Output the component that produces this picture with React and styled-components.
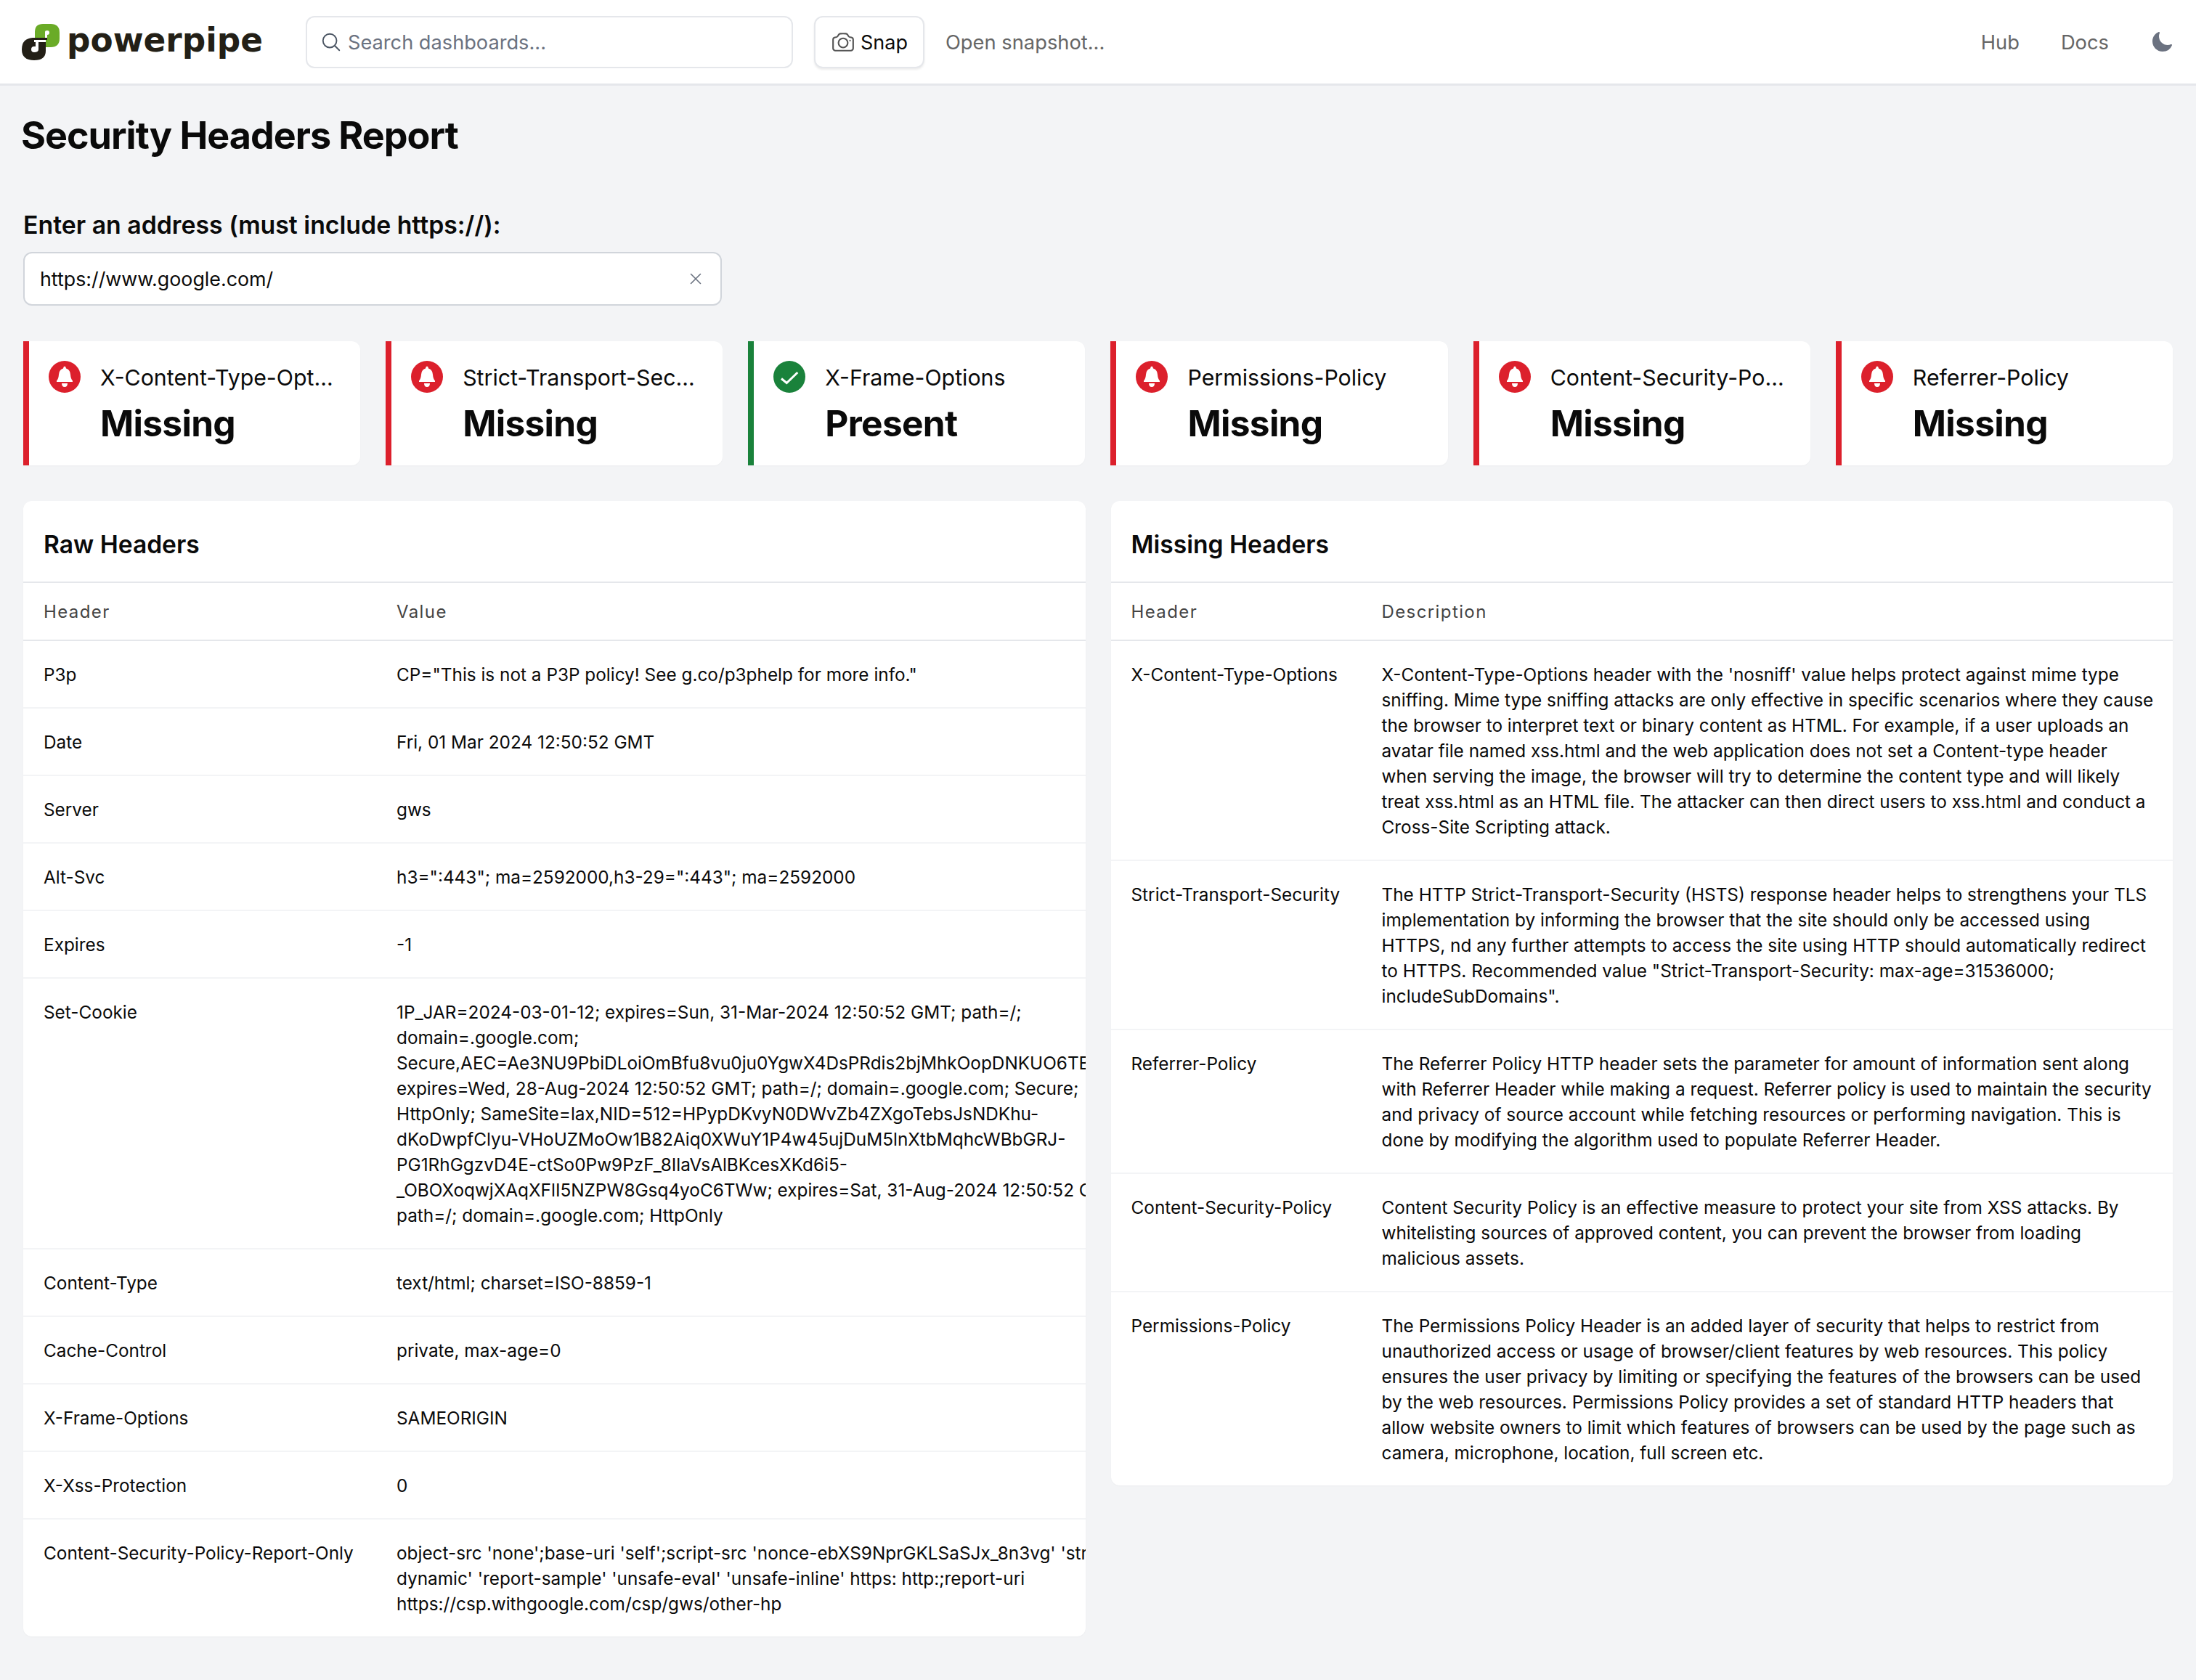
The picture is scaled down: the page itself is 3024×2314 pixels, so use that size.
import React from "react";
import styled, { createGlobalStyle } from "styled-components";
import { HiOutlineMagnifyingGlass, HiOutlineCamera, HiOutlineXMark, HiMoon } from "react-icons/hi2";

const Global = createGlobalStyle`
  html, body { margin: 0; padding: 0; background: #f3f4f6; }
  body { font-family: Inter, "Liberation Sans", sans-serif; color: #0a0a0a; }
  * { box-sizing: border-box; }
`;

const Page = styled.div`
  width: 3024px;
  min-height: 2314px;
  background: #f3f4f6;
`;
const TopBar = styled.header`
  height: 118px;
  background: #fff;
  border-bottom: 3px solid #e5e7eb;
  display: flex;
  align-items: center;
  padding: 1px 31px 0 28px;
`;
const LogoBox = styled.div`
  width: 393px;
  flex: none;
  display: flex;
`;
const SearchBox = styled.div`
  width: 671px;
  height: 72px;
  flex: none;
  border: 2px solid #e5e7eb;
  border-radius: 12px;
  display: flex;
  align-items: center;
  gap: 8px;
  padding-left: 18px;
  color: #6b7280;
  font-size: 27.2px;
  svg { color: #4b5563; font-size: 30px; }
`;
const SnapButton = styled.div`
  margin-left: 29px;
  width: 152px;
  height: 72px;
  flex: none;
  background: #fff;
  border: 2px solid #e5e7eb;
  border-radius: 12px;
  box-shadow: 0 2px 3px rgba(0, 0, 0, 0.08);
  display: flex;
  align-items: center;
  justify-content: center;
  gap: 7px;
  font-size: 27px;
  color: #0a0a0a;
  svg { color: #555; font-size: 34px; }
`;
const NavLink = styled.span`
  font-size: 27.3px;
  color: #666;
`;
const OpenLink = styled(NavLink)`
  margin-left: 29px;
`;
const Spacer = styled.div`
  flex: 1;
`;
const RightNav = styled.div`
  display: flex;
  align-items: center;
  gap: 57px;
  svg { color: #6b7280; font-size: 32px; display: block; }
`;
const Main = styled.main`
  padding: 0 32px;
`;
const Title = styled.h1`
  margin: 33px 0 0 -3px;
  font-size: 52px;
  line-height: 72px;
  font-weight: 700;
  letter-spacing: -1px;
  color: #0a0a0a;
`;
const FieldLabel = styled.label`
  display: block;
  margin-top: 65px;
  font-size: 33.8px;
  line-height: 44px;
  font-weight: 600;
`;
const AddressField = styled.div`
  margin-top: 15px;
  width: 962px;
  height: 74px;
  background: #fff;
  border: 2px solid #d1d5db;
  border-radius: 12px;
  display: flex;
  align-items: center;
  justify-content: space-between;
  padding: 0 21px 0 21px;
  font-size: 26.8px;
  svg { color: #6b7280; font-size: 26px; }
`;
const CardRow = styled.section`
  margin-top: 49px;
  display: grid;
  grid-template-columns: repeat(6, 1fr);
  gap: 35px;
`;
const Card = styled.article`
  height: 171px;
  background: #fff;
  border-left: 8px solid ${(p) => (p.$ok ? "#1a823b" : "#dc202c")};
  border-radius: 0 12px 12px 0;
  padding: 27px 35px 0 27px;
  display: grid;
  grid-template-columns: 44px minmax(0, 1fr);
  column-gap: 27px;
  box-shadow: 0 1px 2px rgba(0, 0, 0, 0.03);
`;
const CardBody = styled.div`
  min-width: 0;
`;
const CardName = styled.div`
  font-size: 30.3px;
  line-height: 46px;
  white-space: nowrap;
  overflow: hidden;
  text-overflow: ellipsis;
`;
const CardValue = styled.div`
  margin-top: 8px;
  font-size: 49.6px;
  line-height: 64px;
  font-weight: 700;
  letter-spacing: -0.7px;
`;
const Panels = styled.section`
  margin-top: 49px;
  display: grid;
  grid-template-columns: 1fr 1fr;
  gap: 35px;
  align-items: start;
`;
const Panel = styled.div`
  background: #fff;
  border-radius: 12px;
  overflow: hidden;
  box-shadow: 0 1px 2px rgba(0, 0, 0, 0.03);
`;
const PanelTitle = styled.h2`
  margin: 0;
  height: 113px;
  padding: 7px 28px 0;
  display: flex;
  align-items: center;
  font-size: 33.6px;
  font-weight: 600;
  border-bottom: 2px solid #e5e7eb;
`;
const Table = styled.table`
  border-collapse: collapse;
  table-layout: fixed;
  width: ${(p) => p.$width}px;
`;
const Th = styled.th`
  height: 79px;
  padding: 1px 0 0 28px;
  text-align: left;
  font-size: 24px;
  font-weight: 400;
  letter-spacing: 1.4px;
  color: #444;
  border-bottom: 2px solid #e5e7eb;
`;
const Tr = styled.tr`
  border-top: 2px solid #f3f4f6;
  &:first-child { border-top: 0; }
`;
const Td = styled.td`
  padding: 29px 22px 27px 28px;
  vertical-align: top;
  font-size: 24.35px;
  line-height: 35px;
`;

const raw = [
  ["P3p", 'CP="This is not a P3P policy! See g.co/p3phelp for more info."'],
  ["Date", "Fri, 01 Mar 2024 12:50:52 GMT"],
  ["Server", "gws"],
  ["Alt-Svc", 'h3=":443"; ma=2592000,h3-29=":443"; ma=2592000'],
  ["Expires", "-1"],
  ["Set-Cookie", "1P_JAR=2024-03-01-12; expires=Sun, 31-Mar-2024 12:50:52 GMT; path=/; domain=.google.com; Secure,AEC=Ae3NU9PbiDLoiOmBfu8vu0ju0YgwX4DsPRdis2bjMhkOopDNKUO6TBsZKw; expires=Wed, 28-Aug-2024 12:50:52 GMT; path=/; domain=.google.com; Secure; HttpOnly; SameSite=lax,NID=512=HPypDKvyN0DWvZb4ZXgoTebsJsNDKhu-dKoDwpfClyu-VHoUZMoOw1B82Aiq0XWuY1P4w45ujDuM5lnXtbMqhcWBbGRJ-PG1RhGgzvD4E-ctSo0Pw9PzF_8IlaVsAlBKcesXKd6i5-_OBOXoqwjXAqXFlI5NZPW8Gsq4yoC6TWw; expires=Sat, 31-Aug-2024 12:50:52 GMT; path=/; domain=.google.com; HttpOnly"],
  ["Content-Type", "text/html; charset=ISO-8859-1"],
  ["Cache-Control", "private, max-age=0"],
  ["X-Frame-Options", "SAMEORIGIN"],
  ["X-Xss-Protection", "0"],
  ["Content-Security-Policy-Report-Only", "object-src 'none';base-uri 'self';script-src 'nonce-ebXS9NprGKLSaSJx_8n3vg' 'strict-dynamic' 'report-sample' 'unsafe-eval' 'unsafe-inline' https: http:;report-uri https://csp.withgoogle.com/csp/gws/other-hp"],
];

const missing = [
  ["X-Content-Type-Options", "X-Content-Type-Options header with the 'nosniff' value helps protect against mime type sniffing. Mime type sniffing attacks are only effective in specific scenarios where they cause the browser to interpret text or binary content as HTML. For example, if a user uploads an avatar file named xss.html and the web application does not set a Content-type header when serving the image, the browser will try to determine the content type and will likely treat xss.html as an HTML file. The attacker can then direct users to xss.html and conduct a Cross-Site Scripting attack."],
  ["Strict-Transport-Security", "The HTTP Strict-Transport-Security (HSTS) response header helps to strengthens your TLS implementation by informing the browser that the site should only be accessed using HTTPS, nd any further attempts to access the site using HTTP should automatically redirect to HTTPS. Recommended value \"Strict-Transport-Security: max-age=31536000; includeSubDomains\"."],
  ["Referrer-Policy", "The Referrer Policy HTTP header sets the parameter for amount of information sent along with Referrer Header while making a request. Referrer policy is used to maintain the security and privacy of source account while fetching resources or performing navigation. This is done by modifying the algorithm used to populate Referrer Header."],
  ["Content-Security-Policy", "Content Security Policy is an effective measure to protect your site from XSS attacks. By whitelisting sources of approved content, you can prevent the browser from loading malicious assets."],
  ["Permissions-Policy", "The Permissions Policy Header is an added layer of security that helps to restrict from unauthorized access or usage of browser/client features by web resources. This policy ensures the user privacy by limiting or specifying the features of the browsers can be used by the web resources. Permissions Policy provides a set of standard HTTP headers that allow website owners to limit which features of browsers can be used by the page such as camera, microphone, location, full screen etc."],
];

const cards = [
  ["X-Content-Type-Options", false],
  ["Strict-Transport-Security", false],
  ["X-Frame-Options", true],
  ["Permissions-Policy", false],
  ["Content-Security-Policy", false],
  ["Referrer-Policy", false],
];

const Logo = () => (
  <svg width="340" height="60" viewBox="28 28 340 60" aria-label="powerpipe">
    <path d="M48 53 V44 Q48 33 59 33 H70 Q82 33 82 45 V53 Q82 65 70 65 H63 V53 Z" fill="#6aab27" />
    <path d="M62 44 Q62 42 65 42 Q68 42 68 45 Q68 48 65 48 V55 H62 Z" fill="#fff" />
    <path d="M30 68 Q30 53 45 52 H47 V55 H65 V52 H47 V58 H63 V70 Q63 83 47 83 Q30 83 30 68 Z" fill="#231f16" />
    <path d="M43 68 Q43 64 47 64 H49 V58 H53 V68 Q53 72 47 72 Q43 72 43 68 Z" fill="#fff" />
    <text x="92" y="71" textLength="270" lengthAdjust="spacingAndGlyphs" fontFamily="DejaVu Sans" fontWeight="700" fontSize="46" fill="#231f16">powerpipe</text>
  </svg>
);

const BellBadge = () => (
  <svg width="44" height="44" viewBox="0 0 44 44">
    <circle cx="22" cy="22" r="22" fill="#dc202c" />
    <path d="M22 7.5 Q23.6 7.5 24 10.5 Q29.5 12 30 19 Q30.5 25 33 27.5 V29 H11 V27.5 Q13.5 25 14 19 Q14.5 12 20 10.5 Q20.4 7.5 22 7.5 Z" fill="#fff" />
    <path d="M18 31 H26 Q26 36 22 36 Q18 36 18 31 Z" fill="#fff" />
  </svg>
);

const CheckBadge = () => (
  <svg width="44" height="44" viewBox="0 0 44 44">
    <circle cx="22" cy="22" r="22" fill="#1a823b" />
    <path d="M11 24.5 L18.3 30.5 L33.3 16" fill="none" stroke="#fff" strokeWidth="3" />
  </svg>
);

export default function App() {
  return (
    <Page>
      <Global />
      <TopBar>
        <LogoBox><Logo /></LogoBox>
        <SearchBox><HiOutlineMagnifyingGlass />Search dashboards...</SearchBox>
        <SnapButton><HiOutlineCamera />Snap</SnapButton>
        <OpenLink>Open snapshot...</OpenLink>
        <Spacer />
        <RightNav>
          <NavLink>Hub</NavLink>
          <NavLink>Docs</NavLink>
          <HiMoon />
        </RightNav>
      </TopBar>
      <Main>
        <Title>Security Headers Report</Title>
        <FieldLabel>Enter an address (must include https://):</FieldLabel>
        <AddressField>https://www.google.com/<HiOutlineXMark /></AddressField>
        <CardRow>
          {cards.map(([name, ok]) => (
            <Card key={name} $ok={ok}>
              {ok ? <CheckBadge /> : <BellBadge />}
              <CardBody>
                <CardName>{name}</CardName>
                <CardValue>{ok ? "Present" : "Missing"}</CardValue>
              </CardBody>
            </Card>
          ))}
        </CardRow>
        <Panels>
          <Panel>
            <PanelTitle>Raw Headers</PanelTitle>
            <Table $width={1562}>
              <colgroup><col width="486" /><col /></colgroup>
              <thead><tr><Th>Header</Th><Th>Value</Th></tr></thead>
              <tbody>
                {raw.map(([k, v]) => (
                  <Tr key={k}><Td>{k}</Td><Td>{v}</Td></Tr>
                ))}
              </tbody>
            </Table>
          </Panel>
          <Panel>
            <PanelTitle>Missing Headers</PanelTitle>
            <Table $width={1462}>
              <colgroup><col width="345" /><col /></colgroup>
              <thead><tr><Th>Header</Th><Th>Description</Th></tr></thead>
              <tbody>
                {missing.map(([k, v]) => (
                  <Tr key={k}><Td>{k}</Td><Td>{v}</Td></Tr>
                ))}
              </tbody>
            </Table>
          </Panel>
        </Panels>
      </Main>
    </Page>
  );
}
